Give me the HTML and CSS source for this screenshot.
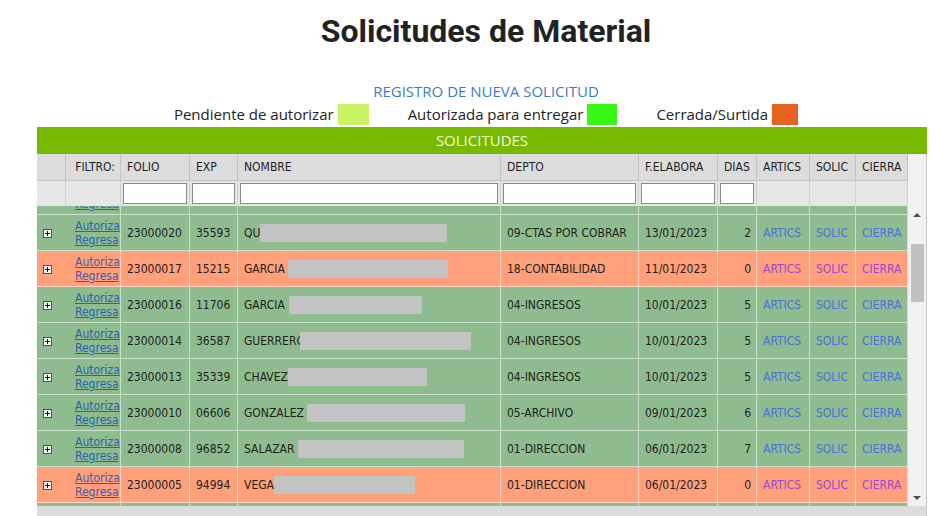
FILE: index.html
```html
<!DOCTYPE html>
<html lang="es">
<head>
<meta charset="utf-8">
<title>Solicitudes de Material</title>
<link rel="stylesheet" href="styles.css">
</head>
<body>
<div class="page">
  <h1 class="title">Solicitudes de Material</h1>
  <div class="registro"><a href="#">REGISTRO DE NUEVA SOLICITUD</a></div>
  <div class="legend">
    <div class="legend-item"><span>Pendiente de autorizar</span><span class="swatch sw-pend"></span></div>
    <div class="legend-item"><span>Autorizada para entregar</span><span class="swatch sw-aut"></span></div>
    <div class="legend-item"><span>Cerrada/Surtida</span><span class="swatch sw-cer"></span></div>
  </div>

  <div class="panel">
    <div class="bar">SOLICITUDES</div>
    <div class="grid">
      <div class="grid-main">
        <div class="head-row cols-head">
          <div class="hc"></div><div class="hc right">FILTRO:</div><div class="hc">FOLIO</div><div class="hc">EXP</div><div class="hc">NOMBRE</div><div class="hc">DEPTO</div><div class="hc">F.ELABORA</div><div class="hc">DIAS</div><div class="hc">ARTICS</div><div class="hc">SOLIC</div><div class="hc">CIERRA</div>
        </div>
        <div class="filter-row cols-head">
          <div class="fc"></div><div class="fc"></div>
          <div class="fc"><input type="text"></div><div class="fc"><input type="text"></div><div class="fc"><input type="text"></div><div class="fc"><input type="text"></div><div class="fc"><input type="text"></div><div class="fc"><input type="text"></div>
          <div class="fc"></div><div class="fc"></div><div class="fc"></div>
        </div>
        <div class="viewport">
          <div class="rows">
            <div class="row g cols-body">
              <div class="c ico"></div><div class="c links"><a href="#">Autoriza</a><a href="#">Regresa</a></div>
              <div class="c"></div><div class="c"></div><div class="c"></div><div class="c"></div><div class="c"></div><div class="c"></div><div class="c"></div><div class="c"></div><div class="c"></div>
            </div>
            <div class="row g cols-body">
              <div class="c ico"><svg width="9" height="9" viewBox="0 0 9 9"><rect x="0.5" y="0.5" width="8" height="8" fill="#fafafa" stroke="#505050"/><path d="M2 4.5h5M4.5 2v5" stroke="#111"/></svg></div>
              <div class="c links"><a href="#">Autoriza</a><a href="#">Regresa</a></div>
              <div class="c">23000020</div><div class="c">35593</div><div class="c"><span class="nm">QU<span class="redact" style="width:187px"></span></span></div><div class="c">09-CTAS POR COBRAR</div><div class="c">13/01/2023</div><div class="c num">2</div>
              <div class="c"><a class="op" href="#">ARTICS</a></div><div class="c"><a class="op" href="#">SOLIC</a></div><div class="c"><a class="op" href="#">CIERRA</a></div>
            </div>
            <div class="row o cols-body">
              <div class="c ico"><svg width="9" height="9" viewBox="0 0 9 9"><rect x="0.5" y="0.5" width="8" height="8" fill="#fafafa" stroke="#505050"/><path d="M2 4.5h5M4.5 2v5" stroke="#111"/></svg></div>
              <div class="c links"><a href="#">Autoriza</a><a href="#">Regresa</a></div>
              <div class="c">23000017</div><div class="c">15215</div><div class="c"><span class="nm">GARCIA <span class="redact" style="width:160px"></span></span></div><div class="c">18-CONTABILIDAD</div><div class="c">11/01/2023</div><div class="c num">0</div>
              <div class="c"><a class="op" href="#">ARTICS</a></div><div class="c"><a class="op" href="#">SOLIC</a></div><div class="c"><a class="op" href="#">CIERRA</a></div>
            </div>
            <div class="row g cols-body">
              <div class="c ico"><svg width="9" height="9" viewBox="0 0 9 9"><rect x="0.5" y="0.5" width="8" height="8" fill="#fafafa" stroke="#505050"/><path d="M2 4.5h5M4.5 2v5" stroke="#111"/></svg></div>
              <div class="c links"><a href="#">Autoriza</a><a href="#">Regresa</a></div>
              <div class="c">23000016</div><div class="c">11706</div><div class="c"><span class="nm">GARCIA I<span class="redact slight" style="width:133px"></span></span></div><div class="c">04-INGRESOS</div><div class="c">10/01/2023</div><div class="c num">5</div>
              <div class="c"><a class="op" href="#">ARTICS</a></div><div class="c"><a class="op" href="#">SOLIC</a></div><div class="c"><a class="op" href="#">CIERRA</a></div>
            </div>
            <div class="row g cols-body">
              <div class="c ico"><svg width="9" height="9" viewBox="0 0 9 9"><rect x="0.5" y="0.5" width="8" height="8" fill="#fafafa" stroke="#505050"/><path d="M2 4.5h5M4.5 2v5" stroke="#111"/></svg></div>
              <div class="c links"><a href="#">Autoriza</a><a href="#">Regresa</a></div>
              <div class="c">23000014</div><div class="c">36587</div><div class="c"><span class="nm">GUERRERO<span class="redact over" style="width:171px"></span></span></div><div class="c">04-INGRESOS</div><div class="c">10/01/2023</div><div class="c num">5</div>
              <div class="c"><a class="op" href="#">ARTICS</a></div><div class="c"><a class="op" href="#">SOLIC</a></div><div class="c"><a class="op" href="#">CIERRA</a></div>
            </div>
            <div class="row g cols-body">
              <div class="c ico"><svg width="9" height="9" viewBox="0 0 9 9"><rect x="0.5" y="0.5" width="8" height="8" fill="#fafafa" stroke="#505050"/><path d="M2 4.5h5M4.5 2v5" stroke="#111"/></svg></div>
              <div class="c links"><a href="#">Autoriza</a><a href="#">Regresa</a></div>
              <div class="c">23000013</div><div class="c">35339</div><div class="c"><span class="nm">CHAVEZ<span class="redact" style="width:139px"></span></span></div><div class="c">04-INGRESOS</div><div class="c">10/01/2023</div><div class="c num">5</div>
              <div class="c"><a class="op" href="#">ARTICS</a></div><div class="c"><a class="op" href="#">SOLIC</a></div><div class="c"><a class="op" href="#">CIERRA</a></div>
            </div>
            <div class="row g cols-body">
              <div class="c ico"><svg width="9" height="9" viewBox="0 0 9 9"><rect x="0.5" y="0.5" width="8" height="8" fill="#fafafa" stroke="#505050"/><path d="M2 4.5h5M4.5 2v5" stroke="#111"/></svg></div>
              <div class="c links"><a href="#">Autoriza</a><a href="#">Regresa</a></div>
              <div class="c">23000010</div><div class="c">06606</div><div class="c"><span class="nm">GONZALEZ <span class="redact" style="width:158px"></span></span></div><div class="c">05-ARCHIVO</div><div class="c">09/01/2023</div><div class="c num">6</div>
              <div class="c"><a class="op" href="#">ARTICS</a></div><div class="c"><a class="op" href="#">SOLIC</a></div><div class="c"><a class="op" href="#">CIERRA</a></div>
            </div>
            <div class="row g cols-body">
              <div class="c ico"><svg width="9" height="9" viewBox="0 0 9 9"><rect x="0.5" y="0.5" width="8" height="8" fill="#fafafa" stroke="#505050"/><path d="M2 4.5h5M4.5 2v5" stroke="#111"/></svg></div>
              <div class="c links"><a href="#">Autoriza</a><a href="#">Regresa</a></div>
              <div class="c">23000008</div><div class="c">96852</div><div class="c"><span class="nm">SALAZAR <span class="redact" style="width:166px"></span></span></div><div class="c">01-DIRECCION</div><div class="c">06/01/2023</div><div class="c num">7</div>
              <div class="c"><a class="op" href="#">ARTICS</a></div><div class="c"><a class="op" href="#">SOLIC</a></div><div class="c"><a class="op" href="#">CIERRA</a></div>
            </div>
            <div class="row o cols-body">
              <div class="c ico"><svg width="9" height="9" viewBox="0 0 9 9"><rect x="0.5" y="0.5" width="8" height="8" fill="#fafafa" stroke="#505050"/><path d="M2 4.5h5M4.5 2v5" stroke="#111"/></svg></div>
              <div class="c links"><a href="#">Autoriza</a><a href="#">Regresa</a></div>
              <div class="c">23000005</div><div class="c">94994</div><div class="c"><span class="nm">VEGA<span class="redact" style="width:141px"></span></span></div><div class="c">01-DIRECCION</div><div class="c">06/01/2023</div><div class="c num">0</div>
              <div class="c"><a class="op" href="#">ARTICS</a></div><div class="c"><a class="op" href="#">SOLIC</a></div><div class="c"><a class="op" href="#">CIERRA</a></div>
            </div>
            <div class="row g cols-body">
              <div class="c ico"></div><div class="c"></div><div class="c"></div><div class="c"></div><div class="c"></div><div class="c"></div><div class="c"></div><div class="c"></div><div class="c"></div><div class="c"></div><div class="c"></div>
            </div>
          </div>
        </div>
      </div>
      <div class="grid-side">
        <div class="side-spacer"></div>
        <div class="scrollbar">
          <div class="sb-btn"><span class="arrow-up"></span></div>
          <div class="sb-track"><div class="sb-thumb"></div></div>
          <div class="sb-btn"><span class="arrow-down"></span></div>
        </div>
      </div>
    </div>
    <div class="footer"></div>
  </div>
</div>
</body>
</html>
```

FILE: styles.css
```css
html, body {
  margin: 0;
  padding: 0;
  overflow: hidden;
}

body {
  background: #ffffff;
  color: #222222;
  font-family: "Open Sans", "Noto Sans", sans-serif;
}

.page {
  padding-left: 30px;
}

.title {
  margin: 11px 0 0;
  text-align: center;
  font-family: Roboto, "Open Sans", sans-serif;
  font-weight: 700;
  font-size: 32px;
  line-height: 40px;
  color: #222222;
}

.registro {
  margin-top: 30px;
  text-align: center;
  font-size: 15px;
  line-height: 20px;
}

.registro a {
  color: #3b7bc4;
  text-decoration: none;
}

.legend {
  display: flex;
  justify-content: center;
  align-items: center;
  gap: 39px;
  height: 22px;
  margin-top: 2px;
  font-size: 15px;
  line-height: 22px;
  color: #222222;
}

.legend-item {
  display: flex;
  align-items: center;
  gap: 4px;
  white-space: nowrap;
}

.swatch {
  display: block;
  height: 21px;
}

.sw-pend {
  width: 31px;
  background: #c9f264;
}

.sw-aut {
  width: 30px;
  background: #35f816;
}

.sw-cer {
  width: 26px;
  background: #e9621f;
}

.panel {
  margin: 2px 0 0 7px;
  width: 890px;
}

.bar {
  height: 27px;
  background: #76b900;
  color: #f3fadb;
  text-align: center;
  font-size: 15px;
  line-height: 27px;
}

.grid {
  display: flex;
}

.grid-main {
  width: 871px;
  font-family: "DejaVu Sans Condensed", "DejaVu Sans", sans-serif;
  font-stretch: condensed;
  font-size: 12px;
  color: #1e1e1e;
}

.cols-head {
  display: grid;
  grid-template-columns: 29px 55px 69px 48px 263px 138px 79px 39px 53px 46px 52px;
}

.cols-body {
  display: grid;
  grid-template-columns: 26px 58px 69px 48px 263px 138px 79px 39px 53px 46px 52px;
}

.head-row {
  height: 27px;
  box-sizing: border-box;
  border-bottom: 1px solid #c3c3c3;
  background: #dcdcdc;
}

.hc {
  display: flex;
  align-items: center;
  padding: 0 6px;
  border-right: 1px solid #c3c3c3;
  white-space: nowrap;
  overflow: hidden;
}

.hc.right {
  justify-content: flex-end;
  padding-right: 5px;
}

.filter-row {
  height: 25px;
  background: #e6e6e6;
}

.fc {
  display: flex;
  align-items: center;
  padding: 0 2px;
  border-right: 1px solid #d2d2d2;
}

.fc input {
  display: block;
  box-sizing: border-box;
  width: 100%;
  height: 21px;
  margin: 0;
  padding: 0 2px;
  border: 1px solid #8a8a8a;
  background: #ffffff;
}

.viewport {
  height: 300px;
  overflow: hidden;
}

/* scroll position of the list */
.rows {
  margin-top: -27px;
}

.row {
  height: 36px;
  box-sizing: border-box;
  border-bottom: 1px solid rgba(255, 255, 255, 0.55);
}

.row.g {
  background: #8fbc8f;
}

.row.o {
  background: #ffa07a;
}

.c {
  display: flex;
  align-items: center;
  padding: 0 6px;
  border-right: 1px solid rgba(255, 255, 255, 0.55);
  white-space: nowrap;
  overflow: hidden;
  line-height: 14px;
}

.c.ico {
  border-right: none;
  padding: 2px 0 0 6px;
}

.c.ico svg {
  display: block;
}

.c.links {
  flex-direction: column;
  align-items: flex-start;
  justify-content: center;
  padding: 0 3px 0 12px;
}

.c.links a {
  color: #2563b8;
  text-decoration: underline;
}

.row.o .c.links a {
  color: #3d5cb8;
}

.c.num {
  justify-content: flex-end;
  padding-right: 5px;
}

.op {
  text-decoration: none;
}

.row.g .op {
  color: #4a6fd8;
}

.row.o .op {
  color: #9d48d0;
}

.nm {
  white-space: nowrap;
}

.redact {
  display: inline-block;
  height: 18px;
  vertical-align: middle;
  background: #c3c3c3;
}

.redact.over {
  margin-left: -5px;
}

.redact.slight {
  margin-left: -2px;
}

.grid-side {
  width: 18px;
  border-right: 1px solid #c8c8c8;
  background: #f1f1f1;
  display: flex;
  flex-direction: column;
}

.side-spacer {
  height: 52px;
}

.scrollbar {
  height: 300px;
  display: flex;
  flex-direction: column;
}

.sb-btn {
  height: 17px;
  display: flex;
  align-items: center;
  justify-content: center;
}

.arrow-up {
  width: 0;
  height: 0;
  border-left: 4px solid transparent;
  border-right: 4px solid transparent;
  border-bottom: 4px solid #505050;
}

.arrow-down {
  width: 0;
  height: 0;
  border-left: 4px solid transparent;
  border-right: 4px solid transparent;
  border-top: 4px solid #505050;
}

.sb-track {
  flex: 1;
  padding: 21px 2px 0 3px;
}

.sb-thumb {
  height: 58px;
  background: #c1c1c1;
}

.footer {
  height: 10px;
  background: #dcdcdc;
  border-right: 1px solid #c8c8c8;
}
```
